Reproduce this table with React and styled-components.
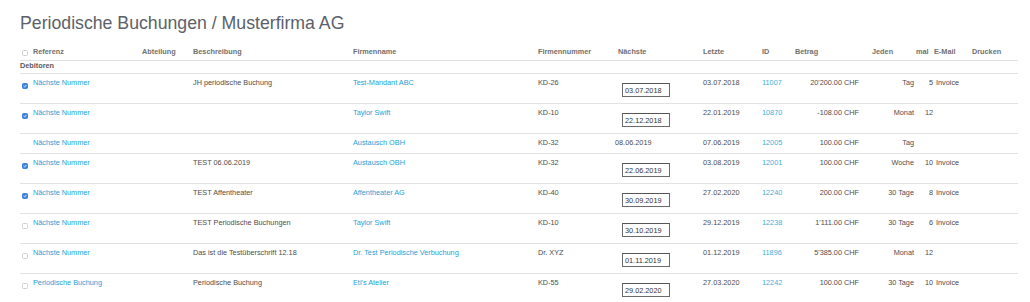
import React from "react";
import styled, { createGlobalStyle } from "styled-components";

const GlobalStyle = createGlobalStyle`
  html, body { margin: 0; padding: 0; background: #ffffff; }
  body { font-family: "Liberation Sans", Arial, sans-serif; }
`;

const COLS = "13px 109px 51px 160px 185px 77px 88px 59px 33px 67px 54px 18px 38px 46px";

const Page = styled.div`
  padding: 0 12px 0 20px;
  width: 998px;
`;

const Title = styled.h1`
  margin: 13px 0 0 0;
  font-size: 17.7px;
  line-height: 20px;
  font-weight: 400;
  color: #5b6168;
  height: 30px;
`;

const Row = styled.div`
  display: grid;
  grid-template-columns: ${COLS};
  border-bottom: 1px solid #e2e2e2;
  font-size: 7.3px;
  line-height: 10px;
  color: ${(p) => (p.$head ? "#707070" : "#4d4d4d")};
  font-weight: ${(p) => (p.$head ? 700 : 400)};
  padding: ${(p) => (p.$head ? "4px 0 3px" : "4px 0 5px")};
`;

const GroupRow = styled.div`
  font-size: 7.3px;
  line-height: 10px;
  font-weight: 700;
  color: #595959;
  padding: 0 0 2px;
  border-bottom: 1px solid #e2e2e2;
`;

const Cell = styled.div`
  white-space: nowrap;
  text-align: ${(p) => p.$align || "left"};
  padding-left: ${(p) => p.$pl || 0}px;
  padding-right: ${(p) => p.$pr || 0}px;
`;

const Link = styled.span`
  color: ${(p) => (p.$light ? "#3cb0dd" : "#23a2d8")};
`;

const Box = styled.span`
  display: block;
  width: 6px;
  height: 6px;
  box-sizing: border-box;
  margin-top: ${(p) => (p.$head ? 3 : 5)}px;
  margin-left: 2px;
  border-radius: 1.5px;
  border: 1px solid ${(p) => (p.$checked ? "#3d7fd9" : "#cfcfcf")};
  background: ${(p) => (p.$checked ? "#3d84dc" : "#ffffff")};
  position: relative;
`;

const DateInput = styled.input`
  display: block;
  box-sizing: border-box;
  width: 48px;
  height: 14px;
  margin: 5px 0 1px 7px;
  padding: 0 2px;
  border: 1px solid #6a6a6a;
  border-top-color: #555;
  border-radius: 0;
  background: #fff;
  font-family: "Liberation Sans", Arial, sans-serif;
  font-size: 7.3px;
  color: #333;
  outline: none;
`;

function Check({ checked, head }) {
  return (
    <Box $checked={checked} $head={head}>
      {checked && (
        <svg width="4" height="4" viewBox="0 0 4 4" style={{ position: "absolute", left: 0, top: 0 }}>
          <path d="M0.6 2.1 L1.6 3 L3.4 0.9" stroke="#fff" strokeWidth="0.8" fill="none" />
        </svg>
      )}
    </Box>
  );
}

const rows = [
  { c: "on", ref: "Nächste Nummer", desc: "JH periodische Buchung", firm: "Test-Mandant ABC", nr: "KD-26", next: "03.07.2018", input: true, last: "03.07.2018", id: "11007", amt: "20'200.00 CHF", every: "Tag", times: "5", mail: "Invoice" },
  { c: "on", ref: "Nächste Nummer", desc: "", firm: "Taylor Swift", nr: "KD-10", next: "22.12.2018", input: true, last: "22.01.2019", id: "10870", amt: "-108.00 CHF", every: "Monat", times: "12", mail: "" },
  { c: "none", ref: "Nächste Nummer", desc: "", firm: "Austausch OBH", nr: "KD-32", next: "08.06.2019", input: false, last: "07.06.2019", id: "12005", amt: "100.00 CHF", every: "Tag", times: "", mail: "" },
  { c: "on", ref: "Nächste Nummer", desc: "TEST 06.06.2019", firm: "Austausch OBH", nr: "KD-32", next: "22.06.2019", input: true, last: "03.08.2019", id: "12001", amt: "100.00 CHF", every: "Woche", times: "10", mail: "Invoice" },
  { c: "on", ref: "Nächste Nummer", desc: "TEST Affentheater", firm: "Affentheater AG", nr: "KD-40", next: "30.09.2019", input: true, last: "27.02.2020", id: "12240", amt: "200.00 CHF", every: "30 Tage", times: "8", mail: "Invoice" },
  { c: "off", ref: "Nächste Nummer", desc: "TEST Periodische Buchungen", firm: "Taylor Swift", nr: "KD-10", next: "30.10.2019", input: true, last: "29.12.2019", id: "12238", amt: "1'111.00 CHF", every: "30 Tage", times: "6", mail: "Invoice" },
  { c: "off", ref: "Nächste Nummer", desc: "Das ist die Testüberschrift 12.18", firm: "Dr. Test Periodische Verbuchung", nr: "Dr. XYZ", next: "01.11.2019", input: true, last: "01.12.2019", id: "11896", amt: "5'385.00 CHF", every: "Monat", times: "12", mail: "" },
  { c: "off", ref: "Periodische Buchung", desc: "Periodische Buchung", firm: "Eti's Atelier", nr: "KD-55", next: "29.02.2020", input: true, last: "27.03.2020", id: "12242", amt: "100.00 CHF", every: "30 Tage", times: "10", mail: "Invoice" },
];

export default function App() {
  return (
    <>
      <GlobalStyle />
      <Page>
        <Title>Periodische Buchungen / Musterfirma AG</Title>
        <Row $head>
          <Cell><Check head /></Cell>
          <Cell>Referenz</Cell>
          <Cell>Abteilung</Cell>
          <Cell>Beschreibung</Cell>
          <Cell>Firmenname</Cell>
          <Cell>Firmennummer</Cell>
          <Cell $pl={3}>Nächste</Cell>
          <Cell>Letzte</Cell>
          <Cell>ID</Cell>
          <Cell>Betrag</Cell>
          <Cell $pl={10}>Jeden</Cell>
          <Cell>mal</Cell>
          <Cell>E-Mail</Cell>
          <Cell>Drucken</Cell>
        </Row>
        <GroupRow>Debitoren</GroupRow>
        {rows.map((r, i) => (
          <Row key={i}>
            <Cell>{r.c !== "none" && <Check checked={r.c === "on"} />}</Cell>
            <Cell><Link>{r.ref}</Link></Cell>
            <Cell />
            <Cell>{r.desc}</Cell>
            <Cell><Link>{r.firm}</Link></Cell>
            <Cell>{r.nr}</Cell>
            <Cell>{r.input ? <DateInput readOnly value={r.next} /> : r.next}</Cell>
            <Cell>{r.last}</Cell>
            <Cell><Link $light>{r.id}</Link></Cell>
            <Cell $align="right" $pr={3}>{r.amt}</Cell>
            <Cell $align="right" $pr={2}>{r.every}</Cell>
            <Cell $align="right" $pr={1}>{r.times}</Cell>
            <Cell $pl={2}>{r.mail}</Cell>
            <Cell />
          </Row>
        ))}
      </Page>
    </>
  );
}
